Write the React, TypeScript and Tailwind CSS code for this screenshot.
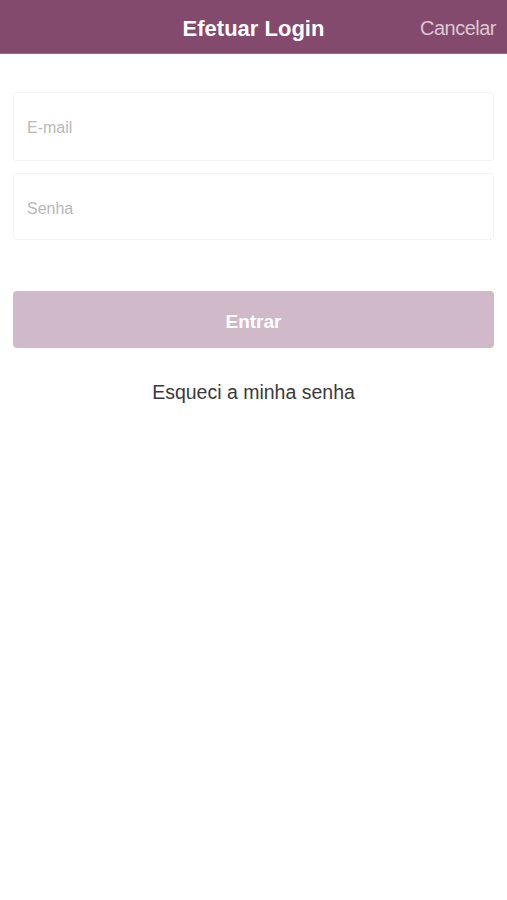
import React from "react";

export default function App() {
  return (
    <div className="min-h-[900px] w-full bg-white" style={{ fontFamily: '"Liberation Sans", Arial, sans-serif' }}>
      <div className="relative flex h-[54px] items-center justify-center bg-[#834a6d] border-b border-[#9a6d89] pt-[3px]">
        <span className="text-[22px] font-bold text-white">Efetuar Login</span>
        <span className="absolute right-[11px] top-[13px] text-[20px] font-light text-[#dcc6d3] tracking-[-0.5px]">Cancelar</span>
      </div>
      <div className="flex flex-col px-[13px] pt-[38px]">
        <div className="flex h-[69px] items-center rounded-[3px] border border-[#f4f4f4] px-[13px] pt-[3px]">
          <span className="text-[16px] text-[#b8b8b8]">E-mail</span>
        </div>
        <div className="mt-[12px] flex h-[67px] items-center rounded-[3px] border border-[#f4f4f4] px-[13px] pt-[5px]">
          <span className="text-[16px] text-[#b8b8b8]">Senha</span>
        </div>
        <div className="mt-[51px] flex h-[57px] items-center justify-center rounded-[4px] bg-[#d0bac9] pt-[5px]">
          <span className="text-[19px] font-bold text-white">Entrar</span>
        </div>
        <div className="mt-[30px] flex justify-center">
          <span className="text-[19.5px] text-[#3a3a3a]">Esqueci a minha senha</span>
        </div>
      </div>
    </div>
  );
}
